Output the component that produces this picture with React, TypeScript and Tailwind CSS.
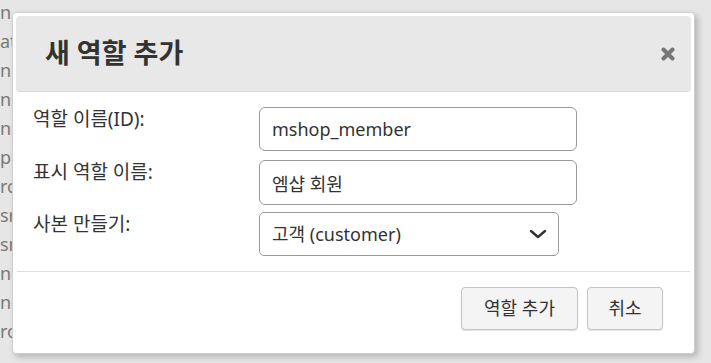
import React from "react";

const font = { fontFamily: '"Noto Sans", "Noto Sans CJK KR", sans-serif' };

// fragments of the page list that peeks out from behind the dialog
const behind = ["n", "at", "nl", "ns", "ns", "p", "rc", "sr", "sr", "nc", "nc", "ro"];

function Field({ label, children }: { label: string; children: React.ReactNode }) {
  return (
    <div className="flex items-start">
      <label className="w-[226px] shrink-0 text-[19px] leading-6 text-[#333]">{label}</label>
      {children}
    </div>
  );
}

export default function App() {
  return (
    <main style={font} className="relative h-[363px] w-full overflow-hidden bg-[#e6e6e6]">
      {/* page behind the modal */}
      <div className="flex flex-col gap-[7px] pt-[1px] text-[18px] leading-[22px] text-[#7a7a7a]">
        {behind.map((t, i) => (
          <span key={i} className="block whitespace-nowrap">
            {t}
          </span>
        ))}
      </div>

      {/* dialog */}
      <div className="absolute left-[12px] top-[12px] flex h-[342px] w-[683px] flex-col rounded-[4px] border border-[#cfcfcf] bg-white p-[3px] shadow-[3px_3px_6px_rgba(0,0,0,0.22)]">
        <header className="flex h-[76px] items-center justify-between rounded-[4px] border-b border-[#dadada] bg-[#e8e8e8] pl-[29px] pr-[16px]">
          <h1 className="text-[27px] font-bold text-[#333]">새 역할 추가</h1>
          <svg width="14" height="14" viewBox="0 0 14 14" className="mt-[1px]">
            <path d="M2.5 2.5 L11.5 11.5 M11.5 2.5 L2.5 11.5" stroke="#777" strokeWidth="4" strokeLinecap="round" />
          </svg>
        </header>

        <section className="flex flex-col pl-[17px] pt-[15px]">
          <Field label="역할 이름(ID):">
            <input
              readOnly
              value="mshop_member"
              style={font}
              className="h-[44px] w-[318px] rounded-[6px] border border-[#999] px-[12px] text-[18px] text-[#333] outline-none"
            />
          </Field>
          <div className="mt-[9px]">
            <Field label="표시 역할 이름:">
              <input
                readOnly
                value="엠샵 회원"
                style={font}
                className="h-[45px] w-[318px] rounded-[6px] border border-[#999] px-[12px] text-[18px] text-[#333] outline-none"
              />
            </Field>
          </div>
          <div className="mt-[7px]">
            <Field label="사본 만들기:">
              <div className="flex h-[44px] w-[300px] items-center justify-between rounded-[5px] border border-[#999] pl-[12px] pr-[11px] text-[18px] text-[#333]">
                <span>고객 (customer)</span>
                <svg width="18" height="10" viewBox="0 0 18 10">
                  <path d="M2 2 L9 8 L16 2" fill="none" stroke="#333" strokeWidth="2.4" strokeLinecap="round" strokeLinejoin="round" />
                </svg>
              </div>
            </Field>
          </div>
        </section>

        <div className="mx-[1px] mt-[15px] border-t border-[#ddd]" />

        <footer className="flex justify-end gap-[9px] pr-[28px] pt-[15px]">
          <button className="h-[43px] w-[117px] rounded-[4px] border border-[#c4c4c4] bg-[#f4f4f4] text-[18px] text-[#333] shadow-[0_1px_1px_rgba(0,0,0,0.12)]">
            역할 추가
          </button>
          <button className="h-[43px] w-[76px] rounded-[4px] border border-[#c4c4c4] bg-[#f4f4f4] text-[18px] text-[#333] shadow-[0_1px_1px_rgba(0,0,0,0.12)]">
            취소
          </button>
        </footer>
      </div>
    </main>
  );
}
